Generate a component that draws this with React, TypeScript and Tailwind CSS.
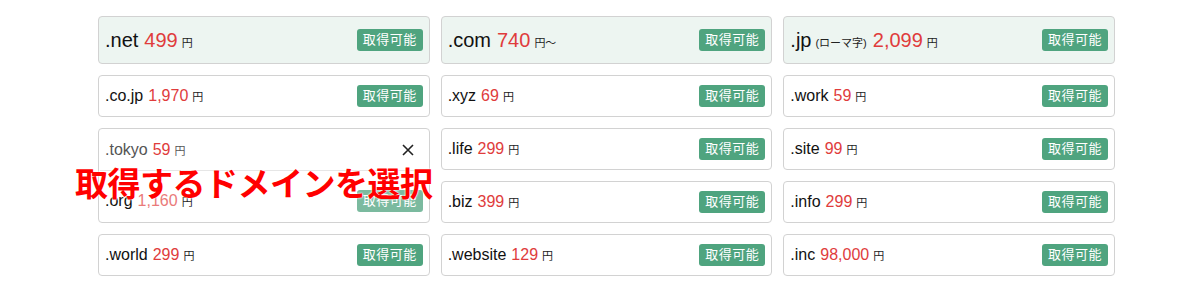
import React from 'react';

type Item = { tld: string; price: string; unit?: string; note?: string };

const top: Item[] = [
  { tld: '.net', price: '499' },
  { tld: '.com', price: '740', unit: '円〜' },
  { tld: '.jp', price: '2,099', note: '(ローマ字)' },
];

const font = "font-['Liberation_Sans','Noto_Sans_CJK_JP',sans-serif]";

const Badge = ({ faded = false }: { faded?: boolean }) => (
  <span
    className={`shrink-0 rounded-[3px] bg-[#4fa47f] px-[6px] h-[22px] flex items-center text-[13px] text-white tracking-[0.5px] ${
      faded ? 'opacity-75' : ''
    }`}
  >
    取得可能
  </span>
);

const Card = ({ item }: { item: Item }) => (
  <div className="h-[42px] rounded-[4px] border border-[#d2d2d2] bg-white flex items-center justify-between pl-[6px] pr-[6px]">
    <div className="flex items-baseline">
      <span className="text-[16px] text-[#111]">{item.tld}</span>
      <span className="ml-[5px] text-[16px] text-[#e03c3c]">{item.price}</span>
      <span className="ml-[4px] text-[11px] text-[#222]">{item.unit ?? '円'}</span>
    </div>
    <Badge />
  </div>
);

const TopCard = ({ item }: { item: Item }) => (
  <div className="h-[48px] rounded-[4px] border border-[#d2d2d2] bg-[#edf5f1] flex items-center justify-between pl-[6px] pr-[6px]">
    <div className="flex items-baseline">
      <span className="text-[20px] text-[#111]">{item.tld}</span>
      {item.note && <span className="ml-[4px] text-[11px] text-[#222]">{item.note}</span>}
      <span className="ml-[6px] text-[20px] text-[#e03c3c]">{item.price}</span>
      <span className="ml-[4px] text-[11px] text-[#222]">{item.unit ?? '円'}</span>
    </div>
    <Badge />
  </div>
);

export default function App() {
  return (
    <div className={`w-[1200px] h-[299px] bg-white overflow-hidden ${font}`}>
      <div className="relative ml-[98px] w-[1017px] pt-[16px]">
        <div className="grid grid-cols-3 gap-x-[11px] gap-y-[11px]">
          {top.map((it) => (
            <TopCard key={it.tld} item={it} />
          ))}

          <Card item={{ tld: '.co.jp', price: '1,970' }} />
          <Card item={{ tld: '.xyz', price: '69' }} />
          <Card item={{ tld: '.work', price: '59' }} />

          {/* selected .tokyo, opened over .org */}
          <div className="row-span-2 rounded-[4px] border border-[#d2d2d2] bg-white flex flex-col">
            <div className="h-[41px] flex items-center justify-between pl-[6px] pr-[15px]">
              <div className="flex items-baseline">
                <span className="text-[16px] text-[#555]">.tokyo</span>
                <span className="ml-[5px] text-[16px] text-[#e03c3c]">59</span>
                <span className="ml-[4px] text-[11px] text-[#555]">円</span>
              </div>
              <svg width="12" height="12" viewBox="0 0 12 12" stroke="#222" strokeWidth="1.6">
                <path d="M1 1 L11 11 M11 1 L1 11" />
              </svg>
            </div>
            <div className="mx-[1px] border-t border-[#e6e6e6]" />
            <div className="flex-1 flex items-center justify-between pl-[6px] pr-[6px] pt-[8px]">
              <div className="flex items-baseline">
                <span className="text-[16px] text-[#111]">.org</span>
                <span className="ml-[5px] text-[16px] text-[#ea7a7a]">1,160</span>
                <span className="ml-[4px] text-[11px] text-[#222]">円</span>
              </div>
              <Badge faded />
            </div>
          </div>
          <Card item={{ tld: '.life', price: '299' }} />
          <Card item={{ tld: '.site', price: '99' }} />

          <Card item={{ tld: '.biz', price: '399' }} />
          <Card item={{ tld: '.info', price: '299' }} />

          <Card item={{ tld: '.world', price: '299' }} />
          <Card item={{ tld: '.website', price: '129' }} />
          <Card item={{ tld: '.inc', price: '98,000' }} />
        </div>

        {/* annotation label */}
        <div className="absolute left-[-23px] top-[166px] text-[33px] leading-none font-bold text-[#ff0000] font-['Noto_Sans_CJK_JP',sans-serif] tracking-[-0.5px] [text-shadow:0_0_2px_#fff,0_0_2px_#fff]">
          取得するドメインを選択
        </div>
      </div>
    </div>
  );
}
